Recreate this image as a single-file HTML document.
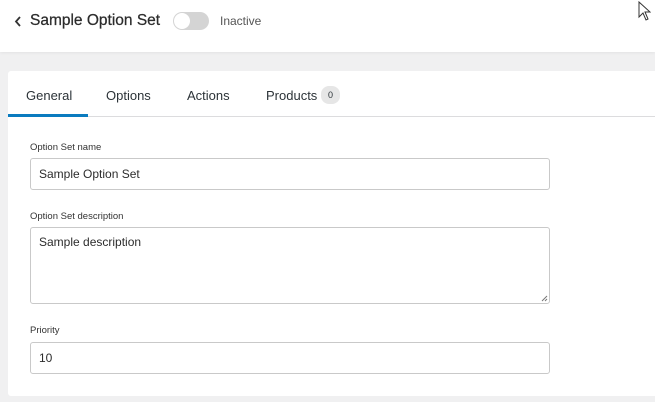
<!DOCTYPE html>
<html><head><style>
*{box-sizing:border-box;margin:0;padding:0}
body{width:655px;height:402px;overflow:hidden;background:#f0f0f1;font-family:"Liberation Sans",sans-serif;position:relative;color:#222}
.hdr{position:absolute;left:0;top:0;width:655px;height:52px;background:#fff;box-shadow:0 1px 3px rgba(0,0,0,.06)}
.title{position:absolute;left:30px;top:12px;font-size:15.5px;color:#2c2c2c;-webkit-text-stroke:0.25px #2c2c2c}
.tog{position:absolute;left:173px;top:12px;width:36px;height:18px;border-radius:9px;background:#d4d4d4}
.tog:after{content:"";position:absolute;left:1px;top:1px;width:16px;height:16px;border-radius:50%;background:#fff}
.inact{position:absolute;left:220px;top:14px;font-size:12px;color:#555}
.card{position:absolute;left:8px;top:71px;width:660px;height:325px;background:#fff;border-radius:3px}
.tab{position:absolute;top:17px;font-size:13px;color:#2c3338;line-height:15px}
.line{position:absolute;left:0;top:45px;width:660px;height:1px;background:#dcdcde}
.ul{position:absolute;left:0;top:43px;width:80px;height:3px;background:#0a7bbf}
.badge{position:absolute;left:55px;top:-2px;background:#e6e6e6;border-radius:8px;font-size:9px;line-height:18px;padding:0 7px}
.lbl{position:absolute;left:30px;font-size:9.5px;color:#333}
.in{position:absolute;left:30px;width:520px;border:1px solid #c9c9c9;border-radius:3px;background:#fff;font-size:12px;color:#2c2c2c;padding-left:8px}
</style></head><body>
<div class="hdr">
<svg style="position:absolute;left:14px;top:16px" width="8" height="11" viewBox="0 0 8 11"><path d="M6 1L2 5.5L6 10" stroke="#333" stroke-width="1.8" fill="none"/></svg>
<div class="title">Sample Option Set</div>
<div class="tog"></div>
<div class="inact">Inactive</div>
<svg style="position:absolute;left:638px;top:1px" width="13" height="20" viewBox="0 0 13 20"><path d="M1 1L1 16L5 12L8 19L10 18L7 11L12 11Z" fill="#fff" stroke="#333" stroke-width="1"/></svg>
</div>
<div class="card">
<div class="tab" style="left:18px">General</div>
<div class="tab" style="left:98px">Options</div>
<div class="tab" style="left:179px">Actions</div>
<div class="tab" style="left:258px">Products<span class="badge">0</span></div>
<div class="line"></div><div class="ul"></div>
</div>
<div class="lbl" style="top:142px">Option Set name</div>
<div class="in" style="top:158px;height:32px;line-height:30px">Sample Option Set</div>
<div class="lbl" style="top:211px">Option Set description</div>
<div class="in" style="top:227px;height:77px;padding-top:7px">Sample description
<svg style="position:absolute;right:1px;bottom:1px" width="7" height="7" viewBox="0 0 7 7"><path d="M1 6L6 1M4 6L6 4" stroke="#777" stroke-width="1"/></svg></div>
<div class="lbl" style="top:325px">Priority</div>
<div class="in" style="top:342px;height:32px;line-height:30px">10</div>
</body></html>
